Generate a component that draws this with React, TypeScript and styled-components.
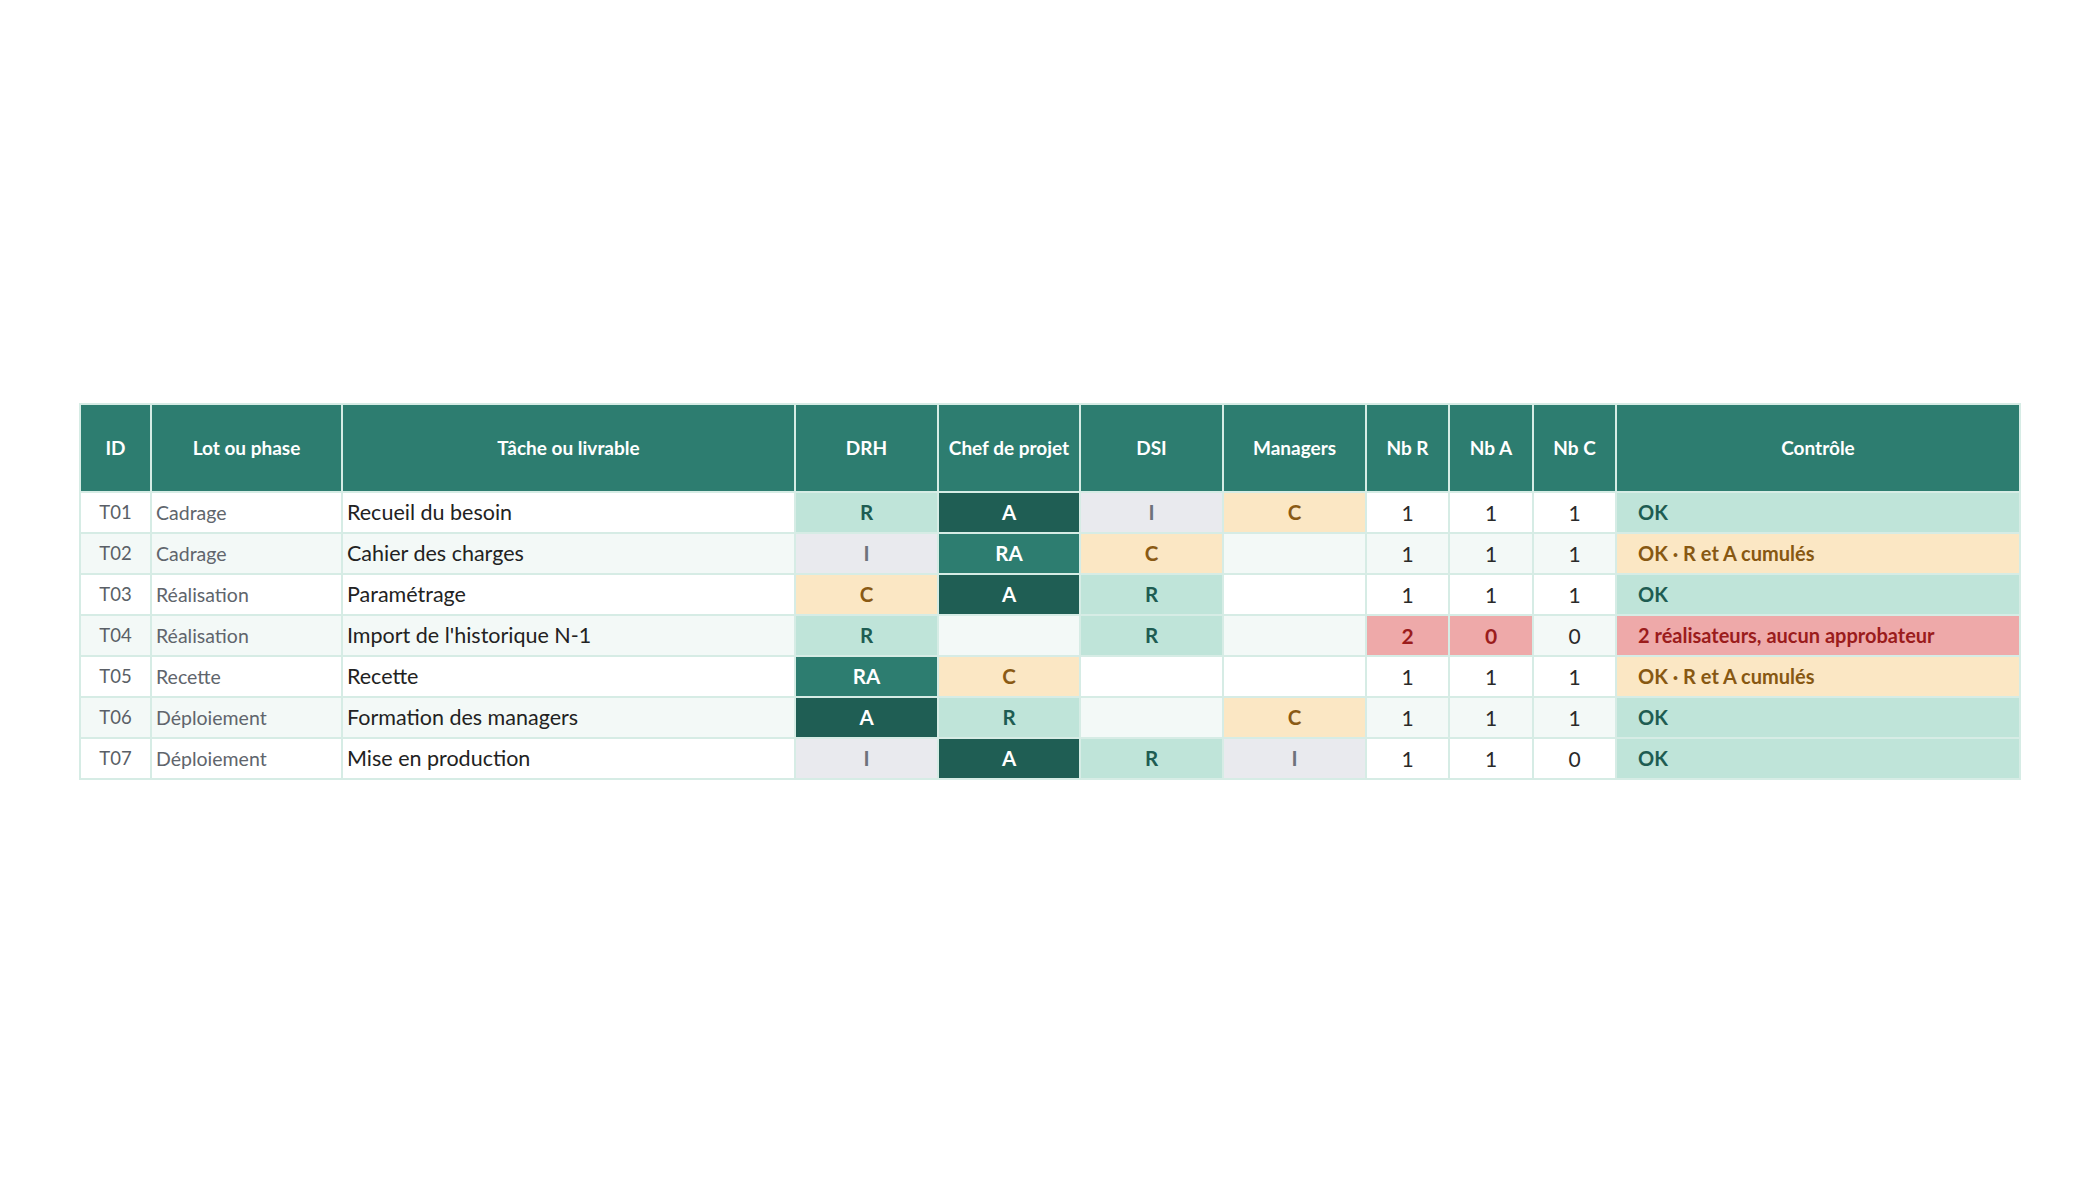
import React from "react";
import styled, { createGlobalStyle, css } from "styled-components";

const GlobalStyle = createGlobalStyle`
  html, body { margin: 0; padding: 0; background: #ffffff; }
  body { font-family: Lato, "Noto Sans", sans-serif; }
`;

type Role = "R" | "A" | "RA" | "C" | "I" | "";
type Status = "ok" | "warn" | "err";

interface Row {
  id: string;
  lot: string;
  task: string;
  roles: Role[];
  nbR: number;
  nbA: number;
  nbC: number;
  status: Status;
  msg: string;
}

const rows: Row[] = [
  { id: "T01", lot: "Cadrage", task: "Recueil du besoin", roles: ["R", "A", "I", "C"], nbR: 1, nbA: 1, nbC: 1, status: "ok", msg: "OK" },
  { id: "T02", lot: "Cadrage", task: "Cahier des charges", roles: ["I", "RA", "C", ""], nbR: 1, nbA: 1, nbC: 1, status: "warn", msg: "OK · R et A cumulés" },
  { id: "T03", lot: "Réalisation", task: "Paramétrage", roles: ["C", "A", "R", ""], nbR: 1, nbA: 1, nbC: 1, status: "ok", msg: "OK" },
  { id: "T04", lot: "Réalisation", task: "Import de l'historique N-1", roles: ["R", "", "R", ""], nbR: 2, nbA: 0, nbC: 0, status: "err", msg: "2 réalisateurs, aucun approbateur" },
  { id: "T05", lot: "Recette", task: "Recette", roles: ["RA", "C", "", ""], nbR: 1, nbA: 1, nbC: 1, status: "warn", msg: "OK · R et A cumulés" },
  { id: "T06", lot: "Déploiement", task: "Formation des managers", roles: ["A", "R", "", "C"], nbR: 1, nbA: 1, nbC: 1, status: "ok", msg: "OK" },
  { id: "T07", lot: "Déploiement", task: "Mise en production", roles: ["I", "A", "R", "I"], nbR: 1, nbA: 1, nbC: 0, status: "ok", msg: "OK" },
];

const headers = [
  "ID",
  "Lot ou phase",
  "Tâche ou livrable",
  "DRH",
  "Chef de projet",
  "DSI",
  "Managers",
  "Nb R",
  "Nb A",
  "Nb C",
  "Contrôle",
];

const Page = styled.div`
  min-height: 100vh;
  display: flex;
  align-items: center;
  justify-content: center;
`;

const Grid = styled.div`
  display: grid;
  grid-template-columns: 69px 189px 451px 141px 140px 141px 141px 81px 82px 81px 402px;
  grid-template-rows: 86px;
  grid-auto-rows: 39px;
  gap: 2px;
  padding: 2px;
  background: #d6ece5;
  margin-top: 1px;
`;

const HeadCell = styled.div`
  background: #2d7d70;
  color: #ffffff;
  font-weight: 700;
  font-size: 19px;
  display: flex;
  align-items: center;
  justify-content: center;
  text-align: center;
`;

const Cell = styled.div<{ $alt: boolean }>`
  background: ${(p) => (p.$alt ? "#f3f9f7" : "#ffffff")};
  display: flex;
  align-items: center;
  white-space: nowrap;
  overflow: hidden;
`;

const IdCell = styled(Cell)`
  justify-content: center;
  color: #5a5f66;
  font-size: 18.5px;
`;

const LotCell = styled(Cell)`
  padding-left: 4px;
  color: #60656c;
  font-size: 19.5px;
`;

const TaskCell = styled(Cell)`
  padding-left: 4px;
  color: #222222;
  font-size: 21.5px;
`;

const roleStyles: Record<string, ReturnType<typeof css>> = {
  R: css`background: #bfe4d9; color: #1e5c52;`,
  A: css`background: #1f5e54; color: #ffffff;`,
  RA: css`background: #2d7d70; color: #ffffff;`,
  C: css`background: #fbe7c4; color: #8a5a14;`,
  I: css`background: #e9eaee; color: #6e727b;`,
};

const RoleCell = styled(Cell)<{ $role: Role }>`
  justify-content: center;
  font-weight: 700;
  font-size: 20.5px;
  ${(p) => (p.$role ? roleStyles[p.$role] : "")}
`;

const NumCell = styled(Cell)<{ $bad?: boolean }>`
  justify-content: center;
  font-size: 21px;
  color: #2a2a2a;
  ${(p) =>
    p.$bad &&
    css`
      background: #eea9a9;
      color: #9b1c1c;
      font-weight: 700;
    `}
`;

const statusStyles: Record<Status, ReturnType<typeof css>> = {
  ok: css`background: #bfe4d9; color: #1e5c52;`,
  warn: css`background: #fbe7c4; color: #875812;`,
  err: css`background: #eea9a9; color: #9b1c1c;`,
};

const StatusCell = styled(Cell)<{ $status: Status }>`
  padding-left: 21px;
  font-weight: 700;
  font-size: 20px;
  ${(p) => statusStyles[p.$status]}
`;

export default function App() {
  return (
    <>
      <GlobalStyle />
      <Page>
        <Grid>
          {headers.map((h) => (
            <HeadCell key={h}>{h}</HeadCell>
          ))}
          {rows.map((r, i) => {
            const alt = i % 2 === 1;
            return (
              <React.Fragment key={r.id}>
                <IdCell $alt={alt}>{r.id}</IdCell>
                <LotCell $alt={alt}>{r.lot}</LotCell>
                <TaskCell $alt={alt}>{r.task}</TaskCell>
                {r.roles.map((role, j) => (
                  <RoleCell key={j} $alt={alt} $role={role}>
                    {role}
                  </RoleCell>
                ))}
                <NumCell $alt={alt} $bad={r.nbR !== 1}>{r.nbR}</NumCell>
                <NumCell $alt={alt} $bad={r.nbA !== 1}>{r.nbA}</NumCell>
                <NumCell $alt={alt}>{r.nbC}</NumCell>
                <StatusCell $alt={alt} $status={r.status}>
                  {r.msg}
                </StatusCell>
              </React.Fragment>
            );
          })}
        </Grid>
      </Page>
    </>
  );
}
